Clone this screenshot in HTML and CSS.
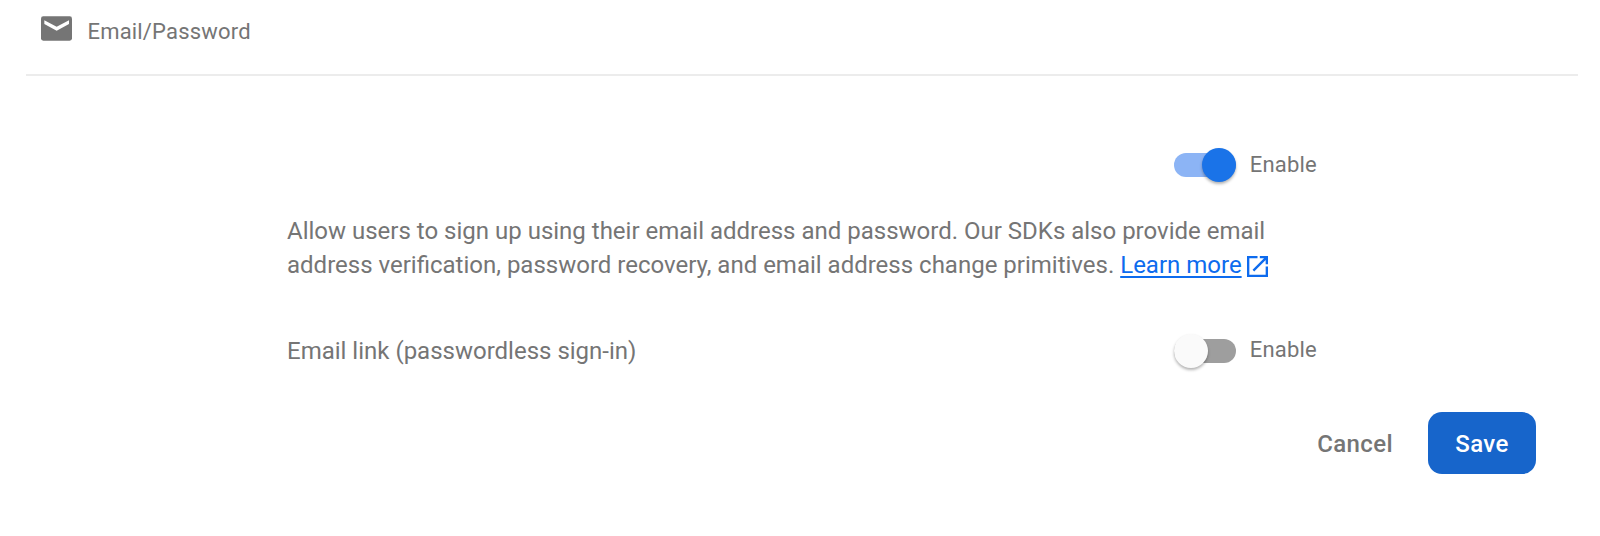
FILE: index.html
```html
<!DOCTYPE html>
<html lang="en">
<head>
<meta charset="utf-8">
<title>Email/Password</title>
<link rel="stylesheet" href="styles.css">
</head>
<body>
<header class="head">
<svg class="mail" viewBox="0 0 93 73"><rect width="93" height="73" rx="7"/><path class="flap" d="M10 12L47 31L84 12V23L47 43L10 23Z"/></svg>
<span class="title">Email/Password</span>
</header>
<main class="content">
<div class="row first"><span></span><label class="toggle on"><span class="track"><span class="thumb"></span></span><span class="label">Enable</span></label></div>
<p class="desc">Allow users to sign up using their email address and password. Our SDKs also provide email<br>address verification, password recovery, and email address change primitives. <a class="link" href="#">Learn more</a><svg class="ext" viewBox="3 3 18 18"><path d="M19 19H5V5h7V3H3v18h18v-9h-2v7zM14 3v2h3.590l-9.830 9.830 1.410 1.410L19 6.410V10h2V3h-7z"/></svg></p>
<div class="row second"><span class="name">Email link (passwordless sign-in)</span><label class="toggle"><span class="track"><span class="thumb"></span></span><span class="label">Enable</span></label></div>
</main>
<footer class="actions"><button class="cancel">Cancel</button><button class="save">Save</button></footer>
</body>
</html>
```
FILE: styles.css
```css
* { box-sizing: border-box; }
body { margin: 0; height: 536px; overflow: hidden; background: #fff; color: #757575; font-family: Roboto, sans-serif; }
.head { display: flex; align-items: center; gap: 15.500px; height: 76px; margin: 0 22px 0 26px; padding: 0 0 12px 15px; border-bottom: 2px solid #ececec; }
.mail { width: 31px; height: 25px; fill: #757575; margin-top: -5px; }
.flap { fill: #fff; }
.title { font-size: 22px; letter-spacing: .18px; }
.content { width: 1030px; margin-left: 287px; }
.row { display: flex; justify-content: space-between; align-items: center; height: 36px; }
.first { margin-top: 71px; }
.toggle { display: flex; align-items: center; gap: 14px; }
.track { position: relative; width: 62px; height: 24px; border-radius: 12px; background: #9e9e9e; }
.thumb { position: absolute; left: 0; top: -5px; width: 34px; height: 34px; border-radius: 50%; background: #fafafa; box-shadow: 0 2px 3px rgba(0,0,0,.3); }
.on .track { background: #8cb4f5; }
.on .thumb { left: 28px; background: #1a73e8; }
.label { font-size: 22px; letter-spacing: .2px; padding-bottom: 2px; }
.desc { margin: 31px 0 0; font-size: 24px; line-height: 34px; white-space: nowrap; }
.link { color: #0d6bee; text-decoration: underline; text-underline-offset: 3px; text-decoration-thickness: 1.500px; }
.ext { width: 21px; height: 21px; margin-left: 5px; fill: #0d6bee; vertical-align: -4px; }
.second { margin-top: 50px; }
.name { font-size: 24px; padding-top: 2px; }
.second .track { margin-top: 1px; }
.actions { display: flex; justify-content: flex-end; align-items: center; gap: 35px; margin: 44.400px 64px 0 0; }
button { border: 0; background: none; font: 500 24px Roboto, sans-serif; letter-spacing: .4px; color: #757575; padding: 1px 0 0; }
.save { width: 108px; height: 62px; border-radius: 14px; background: #1765cb; color: #fff; }
```
